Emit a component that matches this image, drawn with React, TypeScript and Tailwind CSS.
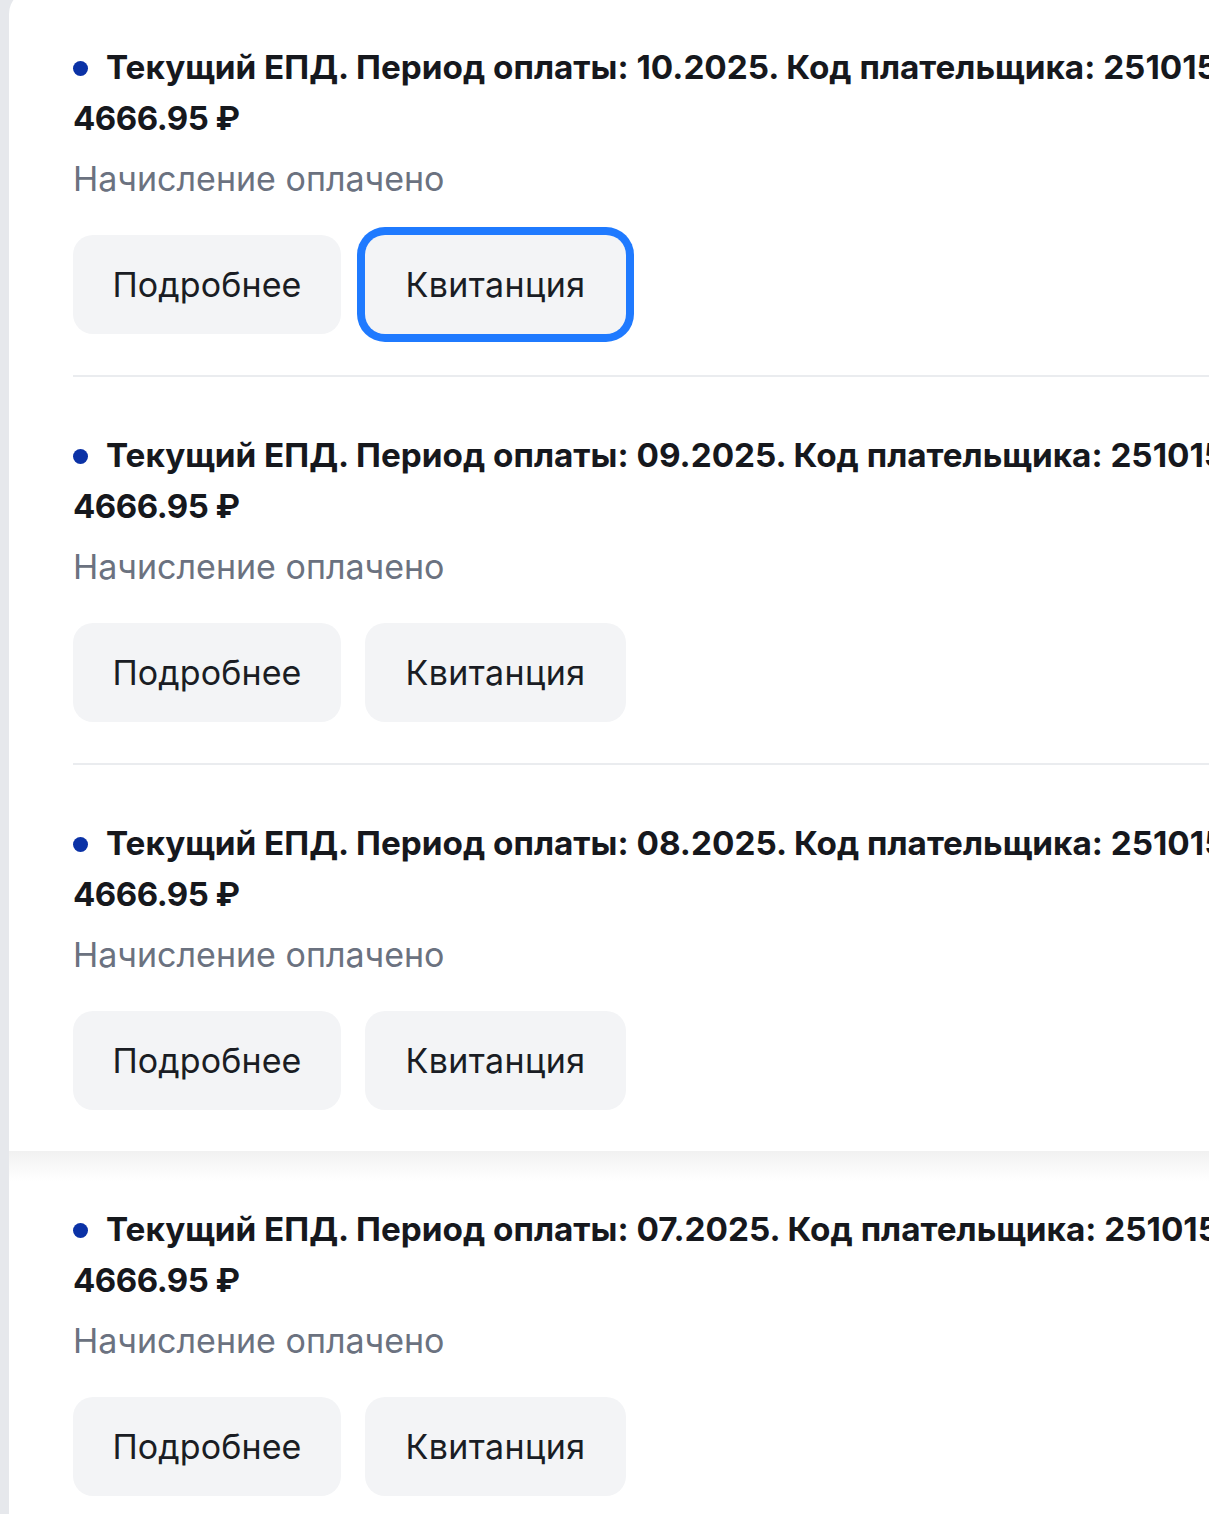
const ITEMS = ['10.2025', '09.2025', '08.2025', '07.2025'];

function Bill({ period, focused }: { period: string; focused?: boolean }) {
  return (
    <div className="pl-[64px]">
      <div className="flex items-center gap-[18px] h-[50px] whitespace-nowrap">
        <span className="w-[15px] h-[15px] rounded-full bg-[#0b32a6] shrink-0" />
        <span className="text-[33.3px] font-bold text-[#16181d]">
          Текущий ЕПД. Период оплаты: {period}. Код плательщика: 2510151234
        </span>
      </div>
      <div className="text-[33px] leading-[50px] font-bold tracking-[-0.5px] text-[#16181d]">4666.95 ₽</div>
      <div className="mt-[14px] text-[34px] leading-[44px] text-[#6b7280]">Начисление оплачено</div>
      <div className="mt-[34px] flex gap-[24px]">
        <button className="w-[268px] h-[99px] rounded-[20px] bg-[#f3f4f6] text-[34px] tracking-[0.1px] text-[#1a1d24]">
          Подробнее
        </button>
        <button
          className={`w-[261px] h-[99px] rounded-[20px] bg-[#f3f4f6] text-[34px] tracking-[0.4px] text-[#1a1d24] ${
            focused ? 'ring-[8px] ring-[#1f7aff]' : ''
          }`}
        >
          Квитанция
        </button>
      </div>
    </div>
  );
}

export default function App() {
  return (
    <div className="min-h-screen bg-[#e6e8ec] pl-[9px] font-['Inter',sans-serif]">
      <div className="-mt-[10px] pt-[53px] bg-white rounded-tl-[24px] overflow-hidden">
        {ITEMS.map((period, i) => (
          <div key={period}>
            <Bill period={period} focused={i === 0} />
            {i < ITEMS.length - 1 &&
              (i === 2 ? (
                <div className="mt-[41px] mb-[24px] h-[30px] bg-gradient-to-b from-[#f1f1f1] to-white" />
              ) : (
                <div className="mt-[41px] mb-[54px] ml-[64px] h-[2px] bg-[#eaecef]" />
              ))}
          </div>
        ))}
        <div className="h-[60px]" />
      </div>
    </div>
  );
}
